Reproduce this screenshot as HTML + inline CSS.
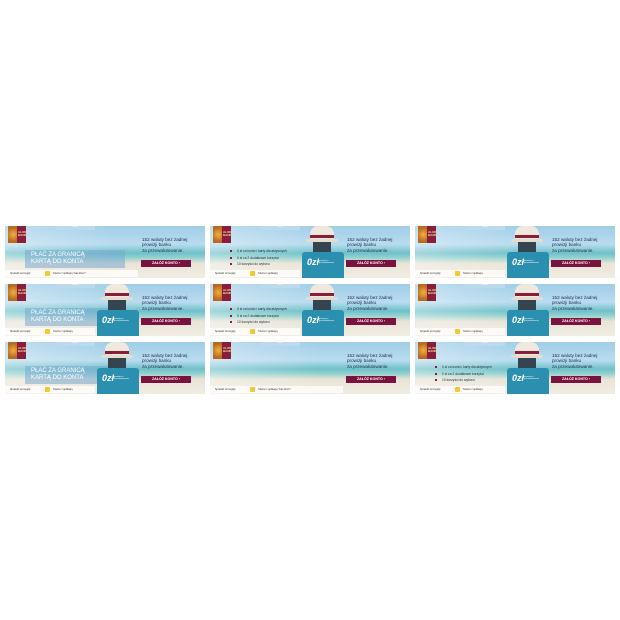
<!DOCTYPE html>
<html><head><meta charset="utf-8"><style>
body{margin:0;width:620px;height:620px;background:#fff;position:relative;overflow:hidden;font-family:"Liberation Sans",sans-serif}
.b{position:absolute;width:200px;height:52px;overflow:hidden;background:linear-gradient(180deg,#9fcde8 0%,#b9dcef 35%,#6fc0c8 52%,#8fd0cf 60%,#e9e4d6 72%,#f2ede2 100%)}
.b:before{content:"";position:absolute;left:0;top:0;width:110px;height:52px;background:linear-gradient(90deg,rgba(255,255,255,.35),rgba(255,255,255,0))}
.logo{position:absolute;left:3px;top:0;width:18px;height:17px;background:#8a1d3a}
.logo i{position:absolute;left:0;top:0;width:9px;height:17px;background:radial-gradient(circle at 60% 50%,#f0b040,#b86a20 70%)}
.logo s{position:absolute;left:10px;top:5px;font-size:3px;color:#f5d9a0;text-decoration:none;line-height:3px;font-weight:bold}
.tab{position:absolute;left:50px;top:0;width:40px;height:4px;background:#bcd9ee;font-size:2px;color:#fff;text-align:center}
.rt{position:absolute;left:137px;top:11px;font-size:4.6px;line-height:5.3px;color:#1a2a4a}
.btn{position:absolute;left:136px;top:34px;width:50px;height:7px;background:#7a1240;color:#fff;font-size:3.6px;font-weight:bold;line-height:7px;text-align:center}
.bot{position:absolute;left:0;top:44px;width:133px;height:7px;background:rgba(255,255,255,.75);font-size:2.4px;color:#333;line-height:7px}
.bot .y{position:absolute;left:40px;top:1px;width:5px;height:5px;background:#f4c830;border-radius:1px}
.bot .t1{position:absolute;left:5px}.bot .t2{position:absolute;left:48px}
.pl{position:absolute;left:20px;top:24px;width:100px;height:18px;background:rgba(120,170,210,.55);color:#fff;font-size:6px;line-height:6.5px;padding:2px 6px;box-sizing:border-box}
.sc{position:absolute;left:92px;top:0;width:42px;height:52px}
.sc .hat{position:absolute;left:8px;top:0;width:24px;height:14px;background:#efe8dc;border-radius:8px 8px 2px 2px}
.sc .band{position:absolute;left:8px;top:9px;width:24px;height:3px;background:#8a1d3a}
.sc .brim{position:absolute;left:4px;top:13px;width:32px;height:3px;background:#e6dccd;border-radius:2px}
.sc .head{position:absolute;left:11px;top:16px;width:18px;height:10px;background:#354550}
.sc .case{position:absolute;left:0;top:26px;width:42px;height:26px;background:#2b8fb0;border-radius:3px 3px 0 0}
.sc .od{position:absolute;left:5px;top:31px;color:#fff;font-size:9px;font-weight:bold;font-style:italic}
.sc .od2{position:absolute;left:17px;top:34px;color:#fff;font-size:2px;width:20px}
.bl{position:absolute;left:20px;top:22px;font-size:3.3px;line-height:6.5px;color:#233}
.bl span{display:inline-block;width:2px;height:2px;background:#8a1d3a;margin-right:5px;vertical-align:middle}
</style></head><body>

<!-- row 1 -->
<div class="b" style="left:5px;top:226px">
<div class="pl">PŁAĆ ZA GRANICĄ<br>KARTĄ DO KONTA</div>
<div class="logo"><i></i><s>ALIOR<br>BANK</s></div><div class="tab">oferta</div>
<div class="rt">152 waluty bez żadnej<br>prowizji banku<br>za przewalutowanie.</div><div class="btn">ZAŁÓŻ KONTO ›</div>
<div class="bot"><span class="t1">Sprawdź szczegóły</span><span class="y"></span><span class="t2">Telefon z aplikacją "Jaki Ziom"!</span></div></div>

<div class="b" style="left:210px;top:226px">
<div class="bl"><span></span>0 zł za konto i karty dla aktywnych<br><span></span>0 zł za 2 dodatkowe korzyści<br><span></span>10 korzyści do wyboru</div>
<div class="sc"><div class="hat"></div><div class="band"></div><div class="brim"></div><div class="head"></div><div class="case"></div><div class="od">0zł</div><div class="od2">prowizji za przewalutowanie</div></div>
<div class="logo"><i></i><s>ALIOR<br>BANK</s></div><div class="tab">oferta</div>
<div class="rt">152 waluty bez żadnej<br>prowizji banku<br>za przewalutowanie.</div><div class="btn">ZAŁÓŻ KONTO ›</div>
<div class="bot" style="width:90px"><span class="t1">Sprawdź szczegóły</span><span class="y"></span><span class="t2">Telefon z aplikacją</span></div></div>

<div class="b" style="left:415px;top:226px">
<div class="sc"><div class="hat"></div><div class="band"></div><div class="brim"></div><div class="head"></div><div class="case"></div><div class="od">0zł</div><div class="od2">prowizji za przewalutowanie</div></div>
<div class="logo"><i></i><s>ALIOR<br>BANK</s></div><div class="tab">oferta</div>
<div class="rt">152 waluty bez żadnej<br>prowizji banku<br>za przewalutowanie.</div><div class="btn">ZAŁÓŻ KONTO ›</div>
<div class="bot" style="width:90px"><span class="t1">Sprawdź szczegóły</span><span class="y"></span><span class="t2">Telefon z aplikacją</span></div></div>

<!-- row 2 -->
<div class="b" style="left:5px;top:284px">
<div class="pl">PŁAĆ ZA GRANICĄ<br>KARTĄ DO KONTA</div>
<div class="sc"><div class="hat"></div><div class="band"></div><div class="brim"></div><div class="head"></div><div class="case"></div><div class="od">0zł</div><div class="od2">prowizji za przewalutowanie</div></div>
<div class="logo"><i></i><s>ALIOR<br>BANK</s></div><div class="tab">oferta</div>
<div class="rt">152 waluty bez żadnej<br>prowizji banku<br>za przewalutowanie.</div><div class="btn">ZAŁÓŻ KONTO ›</div>
<div class="bot" style="width:90px"><span class="t1">Sprawdź szczegóły</span><span class="y"></span><span class="t2">Telefon z aplikacją</span></div></div>

<div class="b" style="left:210px;top:284px">
<div class="bl"><span></span>0 zł za konto i karty dla aktywnych<br><span></span>0 zł za 2 dodatkowe korzyści<br><span></span>10 korzyści do wyboru</div>
<div class="sc"><div class="hat"></div><div class="band"></div><div class="brim"></div><div class="head"></div><div class="case"></div><div class="od">0zł</div><div class="od2">prowizji za przewalutowanie</div></div>
<div class="logo"><i></i><s>ALIOR<br>BANK</s></div><div class="tab">oferta</div>
<div class="rt">152 waluty bez żadnej<br>prowizji banku<br>za przewalutowanie.</div><div class="btn">ZAŁÓŻ KONTO ›</div>
<div class="bot" style="width:90px"><span class="t1">Sprawdź szczegóły</span><span class="y"></span><span class="t2">Telefon z aplikacją</span></div></div>

<div class="b" style="left:415px;top:284px">
<div class="sc"><div class="hat"></div><div class="band"></div><div class="brim"></div><div class="head"></div><div class="case"></div><div class="od">0zł</div><div class="od2">prowizji za przewalutowanie</div></div>
<div class="logo"><i></i><s>ALIOR<br>BANK</s></div><div class="tab">oferta</div>
<div class="rt">152 waluty bez żadnej<br>prowizji banku<br>za przewalutowanie.</div><div class="btn">ZAŁÓŻ KONTO ›</div>
<div class="bot" style="width:90px"><span class="t1">Sprawdź szczegóły</span><span class="y"></span><span class="t2">Telefon z aplikacją</span></div></div>

<!-- row 3 -->
<div class="b" style="left:5px;top:342px">
<div class="pl">PŁAĆ ZA GRANICĄ<br>KARTĄ DO KONTA</div>
<div class="sc"><div class="hat"></div><div class="band"></div><div class="brim"></div><div class="head"></div><div class="case"></div><div class="od">0zł</div><div class="od2">prowizji za przewalutowanie</div></div>
<div class="logo"><i></i><s>ALIOR<br>BANK</s></div><div class="tab">oferta</div>
<div class="rt">152 waluty bez żadnej<br>prowizji banku<br>za przewalutowanie.</div><div class="btn">ZAŁÓŻ KONTO ›</div>
<div class="bot" style="width:90px"><span class="t1">Sprawdź szczegóły</span><span class="y"></span><span class="t2">Telefon z aplikacją</span></div></div>

<div class="b" style="left:210px;top:342px">
<div class="logo"><i></i><s>ALIOR<br>BANK</s></div><div class="tab">oferta</div>
<div class="rt">152 waluty bez żadnej<br>prowizji banku<br>za przewalutowanie.</div><div class="btn">ZAŁÓŻ KONTO ›</div>
<div class="bot"><span class="t1">Sprawdź szczegóły</span><span class="y"></span><span class="t2">Telefon z aplikacją "Jaki Ziom"!</span></div></div>

<div class="b" style="left:415px;top:342px">
<div class="bl"><span></span>0 zł za konto i karty dla aktywnych<br><span></span>0 zł za 2 dodatkowe korzyści<br><span></span>10 korzyści do wyboru</div>
<div class="sc"><div class="hat"></div><div class="band"></div><div class="brim"></div><div class="head"></div><div class="case"></div><div class="od">0zł</div><div class="od2">prowizji za przewalutowanie</div></div>
<div class="logo"><i></i><s>ALIOR<br>BANK</s></div><div class="tab">oferta</div>
<div class="rt">152 waluty bez żadnej<br>prowizji banku<br>za przewalutowanie.</div><div class="btn">ZAŁÓŻ KONTO ›</div>
<div class="bot" style="width:90px"><span class="t1">Sprawdź szczegóły</span><span class="y"></span><span class="t2">Telefon z aplikacją</span></div></div>

</body></html>
